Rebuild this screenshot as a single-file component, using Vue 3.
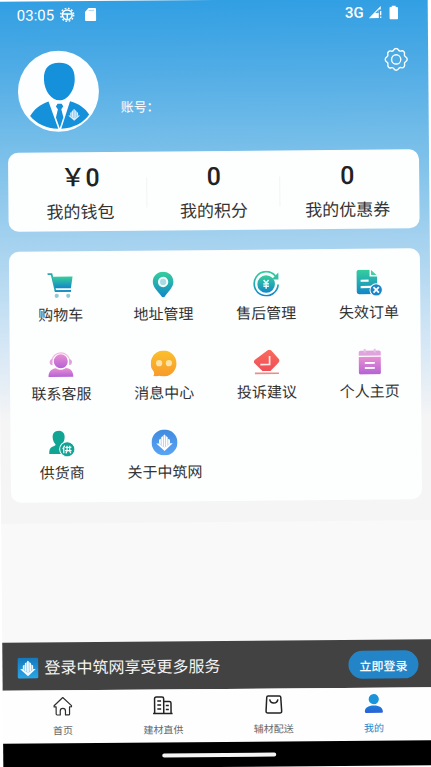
<script setup>
const stats = [
  { value: '￥0', label: '我的钱包' },
  { value: '0', label: '我的积分' },
  { value: '0', label: '我的优惠券' },
]

const services = [
  { icon: 'cart', label: '购物车' },
  { icon: 'pin', label: '地址管理' },
  { icon: 'refund', label: '售后管理' },
  { icon: 'invalid', label: '失效订单' },
  { icon: 'support', label: '联系客服' },
  { icon: 'chat', label: '消息中心' },
  { icon: 'complaint', label: '投诉建议' },
  { icon: 'profile', label: '个人主页' },
  { icon: 'supplier', label: '供货商' },
  { icon: 'about', label: '关于中筑网' },
]

const tabs = [
  { icon: 'home', label: '首页' },
  { icon: 'building', label: '建材直供' },
  { icon: 'bag', label: '辅材配送' },
  { icon: 'me', label: '我的', active: true },
]
</script>

<template>
  <div class="stage">
    <svg class="sprite" aria-hidden="true">
      <defs>
        <linearGradient id="g-teal" x1="0" y1="0" x2="0" y2="1">
          <stop offset="0" stop-color="#35cf9c" />
          <stop offset="1" stop-color="#1286c9" />
        </linearGradient>
        <linearGradient id="g-purple" x1="0" y1="0" x2="0" y2="1">
          <stop offset="0" stop-color="#e88fd2" />
          <stop offset="1" stop-color="#b462d6" />
        </linearGradient>
        <linearGradient id="g-orange" x1="0" y1="0" x2="0" y2="1">
          <stop offset="0" stop-color="#fbc02c" />
          <stop offset="1" stop-color="#f89a2c" />
        </linearGradient>
        <linearGradient id="g-red" x1="0" y1="0" x2="0" y2="1">
          <stop offset="0" stop-color="#fb6a5c" />
          <stop offset="1" stop-color="#ee4f58" />
        </linearGradient>
        <linearGradient id="g-blue" x1="0" y1="0" x2="0" y2="1">
          <stop offset="0" stop-color="#3f8be0" />
          <stop offset="1" stop-color="#5aa4f4" />
        </linearGradient>
        <linearGradient id="g-me" x1="0" y1="0" x2="0" y2="1">
          <stop offset="0" stop-color="#1a7fdc" />
          <stop offset="1" stop-color="#2b5fd4" />
        </linearGradient>
        <linearGradient id="g-tile" x1="0" y1="0" x2="0" y2="1">
          <stop offset="0" stop-color="#1478bd" />
          <stop offset="1" stop-color="#2ba6e8" />
        </linearGradient>
      </defs>

      <symbol id="i-logo" viewBox="0 0 24 24">
        <path d="M10.700 2.500 12 1.500l1.300 1V18l-1.300 1-1.300-1zM7.700 5l2.500-1.500v14L7.700 15.700zM16.300 5l-2.500-1.500v14l2.500-1.800zM4.700 8.500 7.200 7v8.300L4.700 13.500zM19.300 8.500 16.800 7v8.300l2.500-1.800z" />
        <path d="M1 13.300h3.300L12 18.700l7.700-5.400H23L12 23.300z" />
      </symbol>

      <symbol id="i-cart" viewBox="0 0 26 26">
        <path d="M.5 1.600h4l3.800 17.100h15.500" fill="none" stroke="#2aa9ad" stroke-width="1.700" />
        <path d="M5.200 4.300h20.300l-1.800 11.600H7.700z" fill="url(#g-teal)" />
        <path d="M7.500 17.800h16.300v1.800H8z" fill="#1b8cc4" />
        <circle cx="9.500" cy="23.500" r="2.100" fill="#8ecbd4" />
        <circle cx="21" cy="23.500" r="2.100" fill="#8ecbd4" />
      </symbol>

      <symbol id="i-pin" viewBox="0 0 26 26">
        <path d="M13 .3C7.100.3 2.700 4.700 2.700 10.300c0 6 5.800 10.300 8.900 15a1.700 1.700 0 0 0 2.800 0c3.100-4.700 8.900-9 8.900-15C23.300 4.700 18.900.3 13 .3z" fill="url(#g-teal)" />
        <circle cx="13" cy="10.500" r="5.200" fill="#f2fbfa" />
        <circle cx="13" cy="10.500" r="3.100" fill="#a9dbe4" />
      </symbol>

      <symbol id="i-refund" viewBox="0 0 26 26">
        <path d="M22.300 5.500A12 12 0 1 0 25 14" fill="none" stroke="url(#g-teal)" stroke-width="1.700" />
        <path d="M25.300 2v7h-6.800z" fill="#35bfa4" />
        <circle cx="13" cy="13.500" r="8.800" fill="url(#g-teal)" />
        <path d="m10.500 9.500 2.500 3 2.500-3M10.200 13.300h5.600M10.200 15.700h5.600M13 12.700v5.500" fill="none" stroke="#e8fbf7" stroke-width="1.500" />
      </symbol>

      <symbol id="i-invalid" viewBox="0 0 26 26">
        <path d="M3 0h10.500v6.800H21V24.500H3A2.500 2.500 0 0 1 .5 22V2.500A2.500 2.500 0 0 1 3 0z" fill="url(#g-teal)" />
        <path d="m15 .3 5.500 5H15z" fill="#45cfa4" />
        <path d="M4.500 11h8M4.500 17.300h10.500" stroke="#fff" stroke-width="2.200" />
        <circle cx="20" cy="20.300" r="6.200" fill="#1a86c8" stroke="#fdfefe" stroke-width="1" />
        <path d="m17.300 17.600 5.400 5.400m0-5.400L17.300 23" stroke="#fff" stroke-width="1.800" />
      </symbol>

      <symbol id="i-support" viewBox="0 0 26 26">
        <path d="M3.800 9.500a9.300 9.300 0 0 1 18.400 0" fill="none" stroke="#f0b9e4" stroke-width="1.200" />
        <path d="M4.700 7.700v6.200a3.300 3.300 0 0 1-2.900-3.100 3.300 3.300 0 0 1 2.900-3.100zM21.300 7.700v6.200a3.300 3.300 0 0 0 2.900-3.100 3.300 3.300 0 0 0-2.900-3.100z" fill="#e3a0de" />
        <circle cx="13" cy="10" r="7" fill="url(#g-purple)" />
        <path d="M.6 25.500c0-5 2.400-8.200 7.400-8.700 3 2.300 7 2.300 10 0 5 .5 7.400 3.700 7.400 8.700z" fill="url(#g-purple)" />
      </symbol>

      <symbol id="i-chat" viewBox="0 0 26 26">
        <path d="M13 0a13 13 0 1 1-4.800 25.200c-1.800.6-3.800.6-5.800.3 1-1.300 1-2.600.5-4.200A13 13 0 0 1 13 0z" fill="url(#g-orange)" />
        <circle cx="8.300" cy="12.700" r="3.100" fill="#fde3a8" />
        <circle cx="18.100" cy="12.700" r="3.100" fill="#fde3a8" />
      </symbol>

      <symbol id="i-complaint" viewBox="0 0 26 26">
        <path d="M13.300 1.200c1.600-1.400 3.200-1.300 4.500.1l7 7.900c1.200 1.400 1.100 2.700-.2 4l-8 8.300H8.500L1 13.900c-1.300-1.300-1.300-2.500.1-3.700z" fill="url(#g-red)" />
        <path d="M15.800 6.500V15H6.500" fill="none" stroke="#ffe9e7" stroke-width="1.700" />
        <path d="M1 23.800h24" stroke="#f08a84" stroke-width="1.700" />
      </symbol>

      <symbol id="i-profile" viewBox="0 0 26 26">
        <path d="M2 7V3.800C2 2.700 2.800 2 3.900 2h18.200c1.100 0 1.900.7 1.900 1.800V7z" fill="#dfa3de" />
        <path d="M8 0v4M18 0v4" stroke="#e9bfe8" stroke-width="2" />
        <path d="M2 8.300h22v15.600c0 1.100-.8 1.800-1.900 1.800H3.900c-1.100 0-1.900-.7-1.900-1.800z" fill="url(#g-purple)" />
        <path d="M8 14.300h10M8 19.300h10" stroke="#fff" stroke-width="1.800" />
      </symbol>

      <symbol id="i-supplier" viewBox="0 0 26 26">
        <path d="M10.200.5c3.800 0 6 2.500 6 6 0 3.200-1.200 5.600-2.700 7.300 0 1.200.4 1.700 1.500 2.200-1.500 2-1.900 4.700-1.300 7.600H.6c0-4 .7-6.100 3.200-7.200 1.900-.8 3.300-1.100 3.200-2.600-1.600-1.700-2.800-4-2.800-7.300 0-3.500 2.200-6 6-6z" fill="#0fa494" />
        <circle cx="18.700" cy="19" r="7.600" fill="#0fa494" stroke="#fdfefe" stroke-width="1" />
        <g fill="none" stroke="#fff" stroke-width="1.200">
          <path d="m16.200 15.300-2 3.500M15.200 17.500v5.500M16.800 17.200h6M16.500 20.300h6.500M18.500 15.400v4.900M21.200 15.400v4.900M18.500 21l-1.300 2M21 21l1.300 2" />
        </g>
      </symbol>

      <symbol id="i-about" viewBox="0 0 26 26">
        <circle cx="13" cy="13" r="13" fill="url(#g-blue)" />
        <use href="#i-logo" x="4" y="4" width="18" height="18" fill="#fff" />
      </symbol>

      <symbol id="i-home" viewBox="0 0 20 20">
        <path d="M10 1.200 1.300 9.300v1.200h2v7.200c0 .6.300.9.900.9h3.200v-3.900a2.600 2.600 0 0 1 5.200 0v3.900h3.200c.6 0 .9-.3.900-.9v-7.200h2V9.300z" fill="none" stroke="#2e2e2e" stroke-width="1.200" stroke-linejoin="round" />
      </symbol>

      <symbol id="i-building" viewBox="0 0 20 20">
        <g fill="none" stroke="#222" stroke-width="1.500">
          <path d="M.2 18h19.600M1.800 17.500V3.200C1.800 2.100 2.400 1.500 3.500 1.500h5.800c1 0 1.600.6 1.600 1.700v14.300M10.900 6h5.600c1 0 1.700.6 1.700 1.700v9.800" />
          <path d="M4.500 5.500H8.300M4.500 9.500H8.300M4.500 13.500H8.300M13 10h3M13 14h3" />
        </g>
      </symbol>

      <symbol id="i-bag" viewBox="0 0 20 20">
        <path d="M4.300 1.500h11.400c.8 0 1.200.4 1.300 1.200l.8 13.800c.1 1.300-.6 2-1.800 2H4c-1.200 0-1.900-.7-1.800-2L3 2.700c.1-.8.500-1.200 1.300-1.200z" fill="none" stroke="#222" stroke-width="1.500" />
        <path d="M5.900 4.800c.4 2.400 2 3.700 4.100 3.700s3.700-1.300 4.100-3.700" fill="none" stroke="#222" stroke-width="1.500" />
      </symbol>

      <symbol id="i-me" viewBox="0 0 20 20">
        <circle cx="10" cy="5.500" r="5.100" fill="#1b94dc" />
        <path d="M1 18c0-4 3.300-6.200 9-6.200s9 2.200 9 6.200c0 .8-.4 1.200-1.200 1.200H2.200C1.400 19.200 1 18.800 1 18z" fill="url(#g-me)" />
      </symbol>
    </svg>

    <div class="page">
      <main class="content">
        <div class="status">
          <span class="clock">03:05</span>
          <svg class="status-icon" viewBox="0 0 15 15" aria-hidden="true">
            <circle cx="7.500" cy="7.500" r="4.900" fill="none" stroke="#fff" stroke-width="1.500" />
            <circle cx="7.500" cy="7.500" r="6.500" fill="none" stroke="#fff" stroke-width="1.400" stroke-dasharray="1.700 1.700" />
            <path d="M3 6.800h9M7.500 7v5" stroke="#fff" stroke-width="1.500" />
          </svg>
          <svg class="status-icon card-icon" viewBox="0 0 15 15" aria-hidden="true">
            <path d="M5.800 1H12c.8 0 1.300.5 1.300 1.300v10.400c0 .8-.5 1.300-1.300 1.300H3.500c-.8 0-1.300-.5-1.300-1.300V4.800z" fill="#fff" />
            <path d="M6 3.300h5.500" stroke="#a9d6f3" stroke-width="1" />
          </svg>
          <span class="network">3G</span>
          <svg class="status-icon" viewBox="0 0 15 15" aria-hidden="true">
            <path d="M1 13.500 13 1.500V5h-2v8.500z" fill="#fff" />
            <path d="m7.500 8.500 3.500-3.500V8.500z" fill="#46a7e4" />
            <path d="M12.900 6.500v4.200M12.900 12v1.500" stroke="#fff" stroke-width="1.300" />
          </svg>
          <svg class="battery" viewBox="0 0 10 14" aria-hidden="true">
            <path d="M3 0h4v1.500h1.300c.5 0 .9.400.9.900v10.700c0 .5-.4.900-.9.900H1.700c-.5 0-.9-.4-.9-.9V2.400c0-.5.400-.9.900-.9H3z" fill="#fff" />
          </svg>
        </div>

        <header class="account">
          <svg class="avatar" viewBox="0 0 82 82" role="img" aria-label="头像">
            <circle cx="41" cy="41" r="40.500" fill="#fdfeff" />
            <g fill="#1590da">
              <path d="M42 12.500c10 0 15.600 5 15.400 16.500C57.200 40.500 50 50 42 50s-15.200-9.500-15.400-21C26.400 17.500 32 12.500 42 12.500z" />
              <path d="M31 51 40.500 78.500C28 78 18.500 73 12.500 65.500 16.500 58.500 22 54.500 31 51zM52.500 51 43.500 78.500C56 78 66 72.500 71.500 64.500 67.500 58 61.500 53.500 52.500 51z" />
              <path d="m38.300 56 1.700-2.500h4l1.700 2.500-2 3 2 8-3.700 11-3.700-11 2-8z" />
            </g>
            <use href="#i-logo" x="50" y="58" width="13" height="13" fill="#d9effc" />
          </svg>
          <span class="account-name">账号：</span>
          <button class="settings" type="button" aria-label="设置">
            <svg viewBox="0 0 24 24" fill="none" stroke="#fff" stroke-width="1.400" stroke-linejoin="round">
              <path d="M9.700 2.500a2.600 2.600 0 0 1 4.600 0c.5 1 1.600 1.400 2.700 1.100a2.600 2.600 0 0 1 3.300 3.300c-.3 1.100.2 2.200 1.200 2.700a2.600 2.600 0 0 1 0 4.700c-1 .5-1.500 1.600-1.200 2.700a2.600 2.600 0 0 1-3.300 3.300c-1.100-.3-2.200.1-2.700 1.100a2.600 2.600 0 0 1-4.600 0c-.5-1-1.600-1.400-2.700-1.100a2.600 2.600 0 0 1-3.300-3.300c.3-1.100-.2-2.200-1.200-2.700a2.600 2.600 0 0 1 0-4.700c1-.5 1.500-1.600 1.200-2.700A2.600 2.600 0 0 1 7 3.600c1.100.3 2.200-.1 2.700-1.100z" />
              <circle cx="12" cy="12" r="4.600" />
            </svg>
          </button>
        </header>

        <section class="panel stats">
          <a v-for="stat in stats" :key="stat.label" class="stat" href="#">
            <span class="stat-value">{{ stat.value }}</span>
            <span class="stat-label">{{ stat.label }}</span>
          </a>
        </section>

        <nav class="panel services">
          <a v-for="item in services" :key="item.label" class="service" href="#">
            <svg class="service-icon" aria-hidden="true"><use :href="'#i-' + item.icon" /></svg>
            <span>{{ item.label }}</span>
          </a>
        </nav>
      </main>

      <aside class="promo">
        <svg class="promo-logo" viewBox="0 0 21 21" aria-hidden="true">
          <rect width="21" height="21" rx="2" fill="url(#g-tile)" />
          <use href="#i-logo" x="2" y="2" width="17" height="17" fill="#f2fbff" />
        </svg>
        <span class="promo-text">登录中筑网享受更多服务</span>
        <button class="login" type="button">立即登录</button>
      </aside>

      <nav class="tabs">
        <a v-for="tab in tabs" :key="tab.label" class="tab" :class="{ active: tab.active }" href="#">
          <svg class="tab-icon" aria-hidden="true"><use :href="'#i-' + tab.icon" /></svg>
          <span>{{ tab.label }}</span>
        </a>
      </nav>
      <div class="gesture"><span class="gesture-bar"></span></div>
    </div>
  </div>
</template>

<style>
body {
  background: #fff;
}
</style>

<style scoped>
.stage {
  min-height: 100vh;
  display: flex;
  overflow: hidden;
  font-family: Roboto, "Noto Sans CJK SC", sans-serif;
  color: #333;
}

.sprite {
  position: absolute;
  width: 0;
  height: 0;
}

/* The whole screen leans slightly to the left */
.page {
  flex: 1;
  min-width: 0;
  display: flex;
  flex-direction: column;
  background: #f9f9f9;
  transform: rotate(-0.5deg);
}

a {
  color: inherit;
  text-decoration: none;
}

button {
  border: 0;
  padding: 0;
  font-family: inherit;
  color: #fff;
  cursor: pointer;
}

.content {
  padding: 0 10px 21px;
  background: linear-gradient(#319fe3 0, #4eabe5 64px, #74bde9 140px, #a5d2ef 242px, #d3e6f5 340px, #f5f5f5 420px);
}

.status {
  height: 27px;
  padding: 0 19px 0 10px;
  display: flex;
  align-items: center;
  color: #fff;
  font-size: 15px;
  line-height: 20px;
}

.status-icon {
  width: 15px;
  height: 15px;
}

.clock {
  margin-right: 6px;
}

.card-icon {
  margin-left: 8px;
}

.network {
  margin-left: auto;
  margin-right: 4px;
  font-weight: 500;
}

.battery {
  width: 10px;
  height: 14px;
  margin-left: 6px;
}

.account {
  display: flex;
  padding: 22px 10px 20px;
  color: #fff;
}

.avatar {
  width: 82px;
  height: 82px;
}

.account-name {
  align-self: flex-end;
  margin: 0 0 14px 21px;
  font-size: 13px;
  line-height: 20px;
}

.settings {
  width: 24px;
  height: 24px;
  margin-left: auto;
  background: none;
}

.settings svg {
  display: block;
}

.panel {
  background: #fdfefe;
  border-radius: 10px;
}

.stats {
  display: flex;
  padding: 12px 5px 7px;
}

.stat {
  flex: 1;
  display: flex;
  flex-direction: column;
  align-items: center;
  gap: 8px;
  background: linear-gradient(#f3f3f3, #f3f3f3) right 14px / 1px 30px no-repeat;
}

.stat:last-child {
  background: none;
}

.stat-value {
  font-size: 25px;
  font-weight: 500;
  line-height: 28px;
  color: #222;
}

.stat-label {
  font-size: 17px;
  line-height: 24px;
}

.services {
  display: grid;
  grid-template-columns: repeat(4, 1fr);
  row-gap: 25px;
  margin-top: 20px;
  padding: 21px 0 18px;
}

.service {
  display: flex;
  flex-direction: column;
  align-items: center;
  gap: 7px;
  font-size: 15px;
  line-height: 21px;
  white-space: nowrap;
}

.service-icon {
  width: 26px;
  height: 26px;
}

.promo {
  margin-top: auto;
  height: 48px;
  padding: 2px 15px 0;
  box-sizing: border-box;
  display: flex;
  align-items: center;
  gap: 6px;
  background: #424242;
  color: #f4f4f4;
}

.promo-logo {
  width: 21px;
  height: 21px;
}

.promo-text {
  padding-top: 2px;
  font-size: 16px;
  line-height: 24px;
}

.login {
  margin-left: auto;
  width: 70px;
  height: 28px;
  border-radius: 14px;
  background: #2385c8;
  font-size: 12px;
  font-weight: 500;
}

.tabs {
  display: flex;
  justify-content: space-between;
  padding: 6px 50px 5px;
  background: #fefefe;
}

.tab {
  display: flex;
  flex-direction: column;
  align-items: center;
  gap: 8px;
  font-size: 10px;
  line-height: 14px;
  color: #666;
}

.tab-icon {
  width: 20px;
  height: 20px;
}

.active {
  color: #2385c8;
}

.gesture {
  height: 25px;
  display: flex;
  align-items: center;
  justify-content: center;
  background: #000;
}

.gesture-bar {
  width: 114px;
  height: 4px;
  border-radius: 2px;
  background: #f4f4f4;
}
</style>
